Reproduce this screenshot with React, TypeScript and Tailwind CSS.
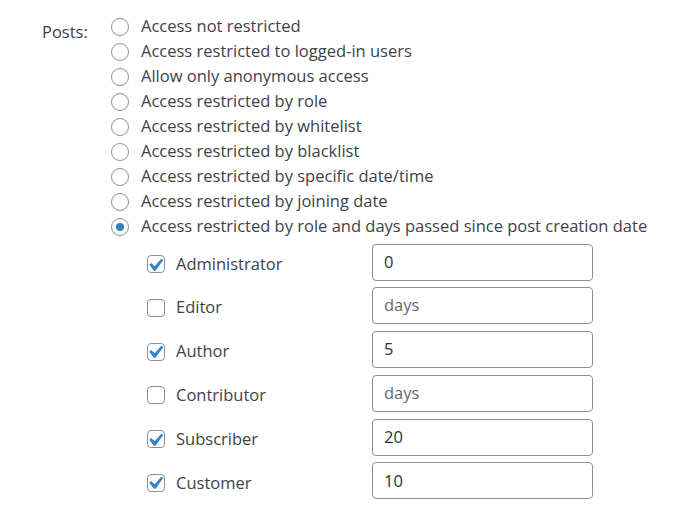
import React from "react";

const radios = [
  "Access not restricted",
  "Access restricted to logged-in users",
  "Allow only anonymous access",
  "Access restricted by role",
  "Access restricted by whitelist",
  "Access restricted by blacklist",
  "Access restricted by specific date/time",
  "Access restricted by joining date",
  "Access restricted by role and days passed since post creation date",
];

const roles: { name: string; checked: boolean; value: string }[] = [
  { name: "Administrator", checked: true, value: "0" },
  { name: "Editor", checked: false, value: "" },
  { name: "Author", checked: true, value: "5" },
  { name: "Contributor", checked: false, value: "" },
  { name: "Subscriber", checked: true, value: "20" },
  { name: "Customer", checked: true, value: "10" },
];

function Radio({ checked }: { checked: boolean }) {
  return (
    <span className="w-[18px] h-[18px] rounded-full border border-[#8c8f94] bg-white flex items-center justify-center shrink-0">
      {checked && <span className="w-[8px] h-[8px] rounded-full bg-[#3582c4]" />}
    </span>
  );
}

function Checkbox({ checked }: { checked: boolean }) {
  return (
    <span className="w-[18px] h-[18px] rounded-[4px] border border-[#8c8f94] bg-white flex items-center justify-center shrink-0">
      {checked && (
        <svg width="17" height="17" viewBox="4.4 3.2 12.6 12.6">
          <path d="M14.83 4.89l1.6 1.1-6.07 8.42H9.02L5.4 9.67l1.5-1.4 2.79 2.6z" fill="#3582c4" />
        </svg>
      )}
    </span>
  );
}

export default function App() {
  return (
    <div
      className="w-[700px] h-[515px] bg-white text-[#3c434a] text-[16.5px]"
      style={{ fontFamily: '"Open Sans", "Noto Sans", sans-serif' }}
    >
      <div className="flex pt-[14px]">
        <div className="w-[111px] pl-[42px] pt-[5px] leading-[25px]">Posts:</div>
        <div className="flex flex-col">
          {radios.map((r, i) => (
            <div key={i} className="flex items-center h-[25px] gap-[12px]">
              <Radio checked={i === radios.length - 1} />
              <span className="whitespace-nowrap">{r}</span>
            </div>
          ))}
          <div className="flex flex-col pl-[36px] pt-[5px] gap-[7.8px]">
            {roles.map((r) => (
              <div key={r.name} className="flex items-center h-[36px]">
                <div className="flex items-center gap-[11px] w-[225px] pt-[4px]">
                  <Checkbox checked={r.checked} />
                  <span>{r.name}</span>
                </div>
                <div className="w-[221px] h-[37px] border border-[#8c8f94] rounded-[4px] flex items-center pl-[11px]">
                  {r.value ? (
                    <span className="text-[#2c3338]">{r.value}</span>
                  ) : (
                    <span className="text-[#646970]">days</span>
                  )}
                </div>
              </div>
            ))}
          </div>
        </div>
      </div>
    </div>
  );
}
